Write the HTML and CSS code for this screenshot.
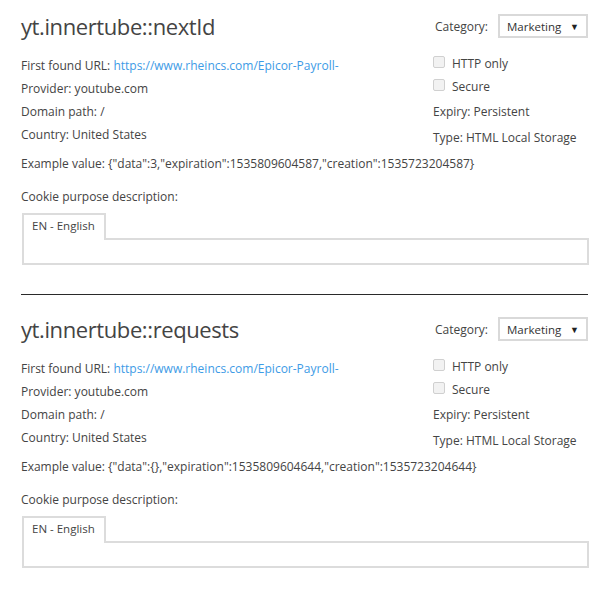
FILE: index.html
```html
<!DOCTYPE html>
<html>
<head>
<meta charset="utf-8">
<link rel="stylesheet" href="styles.css">
</head>
<body>
<section class="cookie first">
  <div class="head">
    <h2 class="title">yt.innertube::nextId</h2>
    <div class="category"><span>Category:</span><div class="select"><span>Marketing</span><span class="arrow">▼</span></div></div>
  </div>
  <div class="details">
    <div class="left">
      <div class="row">First found URL: <a class="link" href="#">https://www.rheincs.com/Epicor-Payroll-</a></div>
      <div class="row">Provider: youtube.com</div>
      <div class="row">Domain path: /</div>
      <div class="row">Country: United States</div>
    </div>
    <div class="right">
      <label class="row check"><input type="checkbox" class="cb"><span>HTTP only</span></label>
      <label class="row check"><input type="checkbox" class="cb"><span>Secure</span></label>
      <div class="row expiry">Expiry: Persistent</div>
      <div class="row type">Type: HTML Local Storage</div>
    </div>
  </div>
  <div class="example">Example value: {"data":3,"expiration":1535809604587,"creation":1535723204587}</div>
  <div class="purpose">Cookie purpose description:</div>
  <div class="tabs">
    <div class="tab">EN - English</div>
    <div class="panel"></div>
  </div>
</section>
<hr class="sep">
<section class="cookie">
  <div class="head">
    <h2 class="title">yt.innertube::requests</h2>
    <div class="category"><span>Category:</span><div class="select"><span>Marketing</span><span class="arrow">▼</span></div></div>
  </div>
  <div class="details">
    <div class="left">
      <div class="row">First found URL: <a class="link" href="#">https://www.rheincs.com/Epicor-Payroll-</a></div>
      <div class="row">Provider: youtube.com</div>
      <div class="row">Domain path: /</div>
      <div class="row">Country: United States</div>
    </div>
    <div class="right">
      <label class="row check"><input type="checkbox" class="cb"><span>HTTP only</span></label>
      <label class="row check"><input type="checkbox" class="cb"><span>Secure</span></label>
      <div class="row expiry">Expiry: Persistent</div>
      <div class="row type">Type: HTML Local Storage</div>
    </div>
  </div>
  <div class="example">Example value: {"data":{},"expiration":1535809604644,"creation":1535723204644}</div>
  <div class="purpose">Cookie purpose description:</div>
  <div class="tabs">
    <div class="tab">EN - English</div>
    <div class="panel"></div>
  </div>
</section>
</body>
</html>
```
FILE: styles.css
```css
html, body {
  margin: 0;
  padding: 0;
  background: #fff;
}
body {
  font-family: "Open Sans", "Noto Sans", sans-serif;
  font-size: 12px;
  color: #444;
}
.cookie {
  padding: 14px 19px 0 21px;
}
.sep + .cookie {
  padding-top: 22px;
}
.head {
  display: flex;
  justify-content: space-between;
  align-items: center;
  height: 24px;
}
.title {
  margin: 0;
  font-size: 22px;
  letter-spacing: -0.4px;
  font-weight: 400;
  color: #444;
  line-height: 24px;
}
.category {
  display: flex;
  align-items: center;
  gap: 10px;
  font-size: 12px;
}
.select {
  box-sizing: border-box;
  width: 90px;
  height: 24px;
  border: 2px solid #d9d9d9;
  display: flex;
  align-items: center;
  justify-content: space-between;
  padding: 0 7px 0 7px;
  font-size: 11.5px;
  color: #333;
}
.arrow {
  font-size: 9px;
  color: #222;
}
.details {
  display: grid;
  grid-template-columns: 1fr 155px;
  margin-top: 16px;
}
.row {
  height: 23px;
  line-height: 23px;
  white-space: nowrap;
}
.right .check:first-child {
  margin-top: -2px;
}
.right .expiry {
  margin-top: 2px;
}
.right .type {
  margin-top: 3px;
}
.link {
  color: #3d9be6;
  text-decoration: none;
}
.check {
  display: flex;
  align-items: center;
  gap: 7px;
}
.cb {
  appearance: none;
  -webkit-appearance: none;
  margin: 0;
  width: 12px;
  height: 12px;
  border: 1px solid #d0d0d0;
  border-radius: 2px;
  background: #f2f2f2;
  position: relative;
  top: -2px;
}
.example {
  margin-top: 3px;
  height: 23px;
  line-height: 23px;
  white-space: nowrap;
}
.purpose {
  margin-top: 10px;
  height: 23px;
  line-height: 23px;
}
.tabs {
  margin-top: 5px;
}
.tab {
  box-sizing: border-box;
  width: 84px;
  height: 27px;
  border: 2px solid #dcdcdc;
  border-bottom: none;
  background: #fff;
  margin-left: 1px;
  margin-bottom: -2px;
  padding: 1px 0 0 8px;
  line-height: 20px;
  font-size: 11.5px;
  position: relative;
  z-index: 1;
}
.panel {
  box-sizing: border-box;
  height: 27px;
  border: 2px solid #dcdcdc;
  margin-left: 1px;
  margin-right: -1px;
}
.sep {
  margin: 29px 19px 0 21px;
  border: none;
  border-top: 1px solid #2a2a2a;
  height: 0;
}
```
